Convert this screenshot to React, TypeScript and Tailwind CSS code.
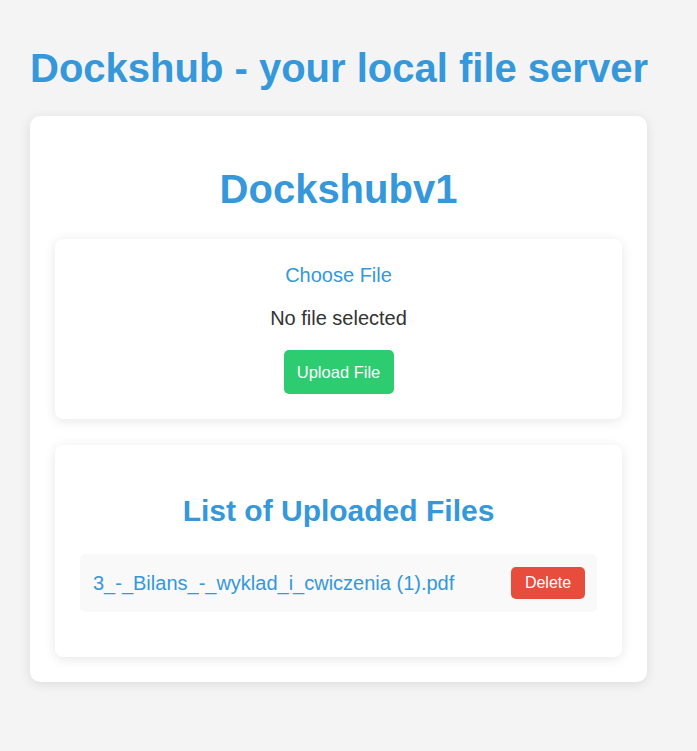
import React from 'react';

const files = ['3_-_Bilans_-_wyklad_i_cwiczenia (1).pdf'];

const App: React.FC = () => {
  return (
    <div className="min-h-screen w-full bg-[#f4f4f4] px-[30px] pt-[46px] pb-[40px] font-['Liberation_Sans',Arial,sans-serif] text-[#333]">
      <h1 className="m-0 text-[40px] font-bold leading-[normal] text-[#3498db] whitespace-nowrap">
        Dockshub - your local file server
      </h1>

      {/* main card */}
      <div className="mt-[25px] w-[617px] rounded-[10px] bg-white px-[25px] pt-[51px] pb-[25px] shadow-[0_2px_12px_rgba(0,0,0,0.1)]">
        <h2 className="m-0 text-center text-[40px] font-bold leading-[normal] text-[#3498db]">Dockshubv1</h2>

        {/* upload */}
        <div className="mt-[27px] flex flex-col items-center rounded-[8px] bg-white px-[25px] pt-[25px] pb-[25px] shadow-[0_2px_12px_rgba(0,0,0,0.1)]">
          <label className="cursor-pointer text-[20px] leading-[normal] text-[#3498db]">Choose File</label>
          <p className="mt-[20px] text-[20px] leading-[normal] text-[#333]">No file selected</p>
          <button className="mt-[20px] flex h-[44px] w-[110px] items-center justify-center rounded-[5px] bg-[#2ecc71] text-[16.5px] text-white">
            Upload File
          </button>
        </div>

        {/* list */}
        <div className="mt-[26px] rounded-[8px] bg-white px-[25px] pt-[49px] pb-[45px] shadow-[0_2px_12px_rgba(0,0,0,0.1)]">
          <h2 className="m-0 text-center text-[30px] font-bold leading-[normal] text-[#3498db]">List of Uploaded Files</h2>
          <ul className="mt-[26px] flex flex-col gap-[10px]">
            {files.map((f) => (
              <li key={f} className="flex h-[58px] items-center justify-between rounded-[5px] bg-[#f9f9f9] pl-[13px] pr-[12px]">
                <a className="text-[20px] leading-[normal] text-[#3498db]">{f}</a>
                <button className="flex h-[32px] w-[74px] items-center justify-center rounded-[5px] bg-[#e74c3c] text-[16px] text-white">
                  Delete
                </button>
              </li>
            ))}
          </ul>
        </div>
      </div>
    </div>
  );
};

export default App;
